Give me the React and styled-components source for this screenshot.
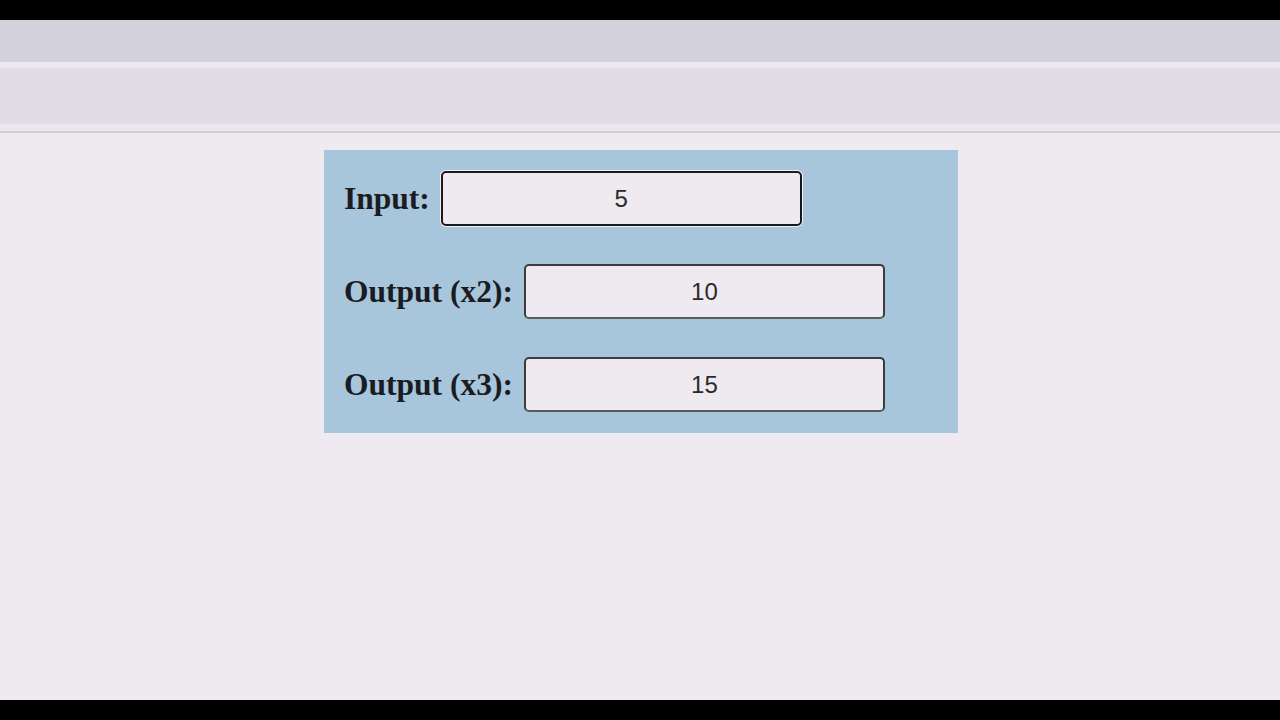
import React, { useState } from 'react';
import styled, { createGlobalStyle } from 'styled-components';

const GlobalStyle = createGlobalStyle`
  html, body {
    margin: 0;
    padding: 0;
    background: #000;
  }
  * { box-sizing: border-box; }
`;

const Screen = styled.div`
  width: 1280px;
  height: 720px;
  display: flex;
  flex-direction: column;
  background: #000;
  padding: 20px 0;
`;

const TabStrip = styled.div`
  height: 48px;
  background: #d3d2dc;
  border-bottom: 6px solid #ece8ef;
  flex: 0 0 auto;
`;

const Toolbar = styled.div`
  height: 65px;
  background: #e0dde4;
  border-bottom: 2px solid #d2ced6;
  box-shadow: inset 0 -7px 0 #ebe7ee;
  flex: 0 0 auto;
`;

const Page = styled.div`
  flex: 1;
  background: #efeaf0;
  padding-top: 17px;
  display: flex;
  justify-content: center;
  align-items: flex-start;
`;

const Panel = styled.div`
  width: 634px;
  margin-left: 2px;
  background: #a7c6dc;
  padding: 21px 20px;
  display: flex;
  flex-direction: column;
  gap: 38px;
`;

const Row = styled.div`
  display: flex;
  align-items: center;
  gap: 11px;
`;

const Label = styled.label`
  font-family: "Liberation Serif", "Times New Roman", serif;
  font-weight: bold;
  font-size: 31.5px;
  color: #1b1b22;
`;

const Field = styled.input`
  width: 361px;
  height: 55px;
  border: 2px solid ${p => (p.$focused ? '#1a1a1a' : '#3c3c3c')};
  border-bottom-color: ${p => (p.$focused ? '#1a1a1a' : '#5a5a5a')};
  border-radius: 5px;
  background: #efeaf0;
  font-family: "Liberation Sans", Arial, sans-serif;
  font-size: 24px;
  color: #2a2a2a;
  text-align: center;
  outline: none;
  box-shadow: ${p => (p.$focused ? '0 0 0 1px #f4f0f5' : 'none')};
`;

export default function App() {
  const [value, setValue] = useState('5');
  const n = Number(value) || 0;

  return (
    <>
      <GlobalStyle />
      <Screen>
        <TabStrip />
        <Toolbar />
        <Page>
          <Panel>
            <Row>
              <Label htmlFor="in">Input:</Label>
              <Field
                id="in"
                $focused
                value={value}
                onChange={e => setValue(e.target.value)}
              />
            </Row>
            <Row>
              <Label>Output (x2):</Label>
              <Field readOnly value={n * 2} />
            </Row>
            <Row>
              <Label>Output (x3):</Label>
              <Field readOnly value={n * 3} />
            </Row>
          </Panel>
        </Page>
      </Screen>
    </>
  );
}
